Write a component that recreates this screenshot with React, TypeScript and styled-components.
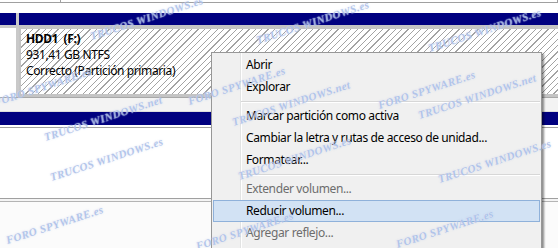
import styled, { createGlobalStyle } from "styled-components";

const GlobalStyle = createGlobalStyle`
  html, body {
    margin: 0;
    padding: 0;
    background: #fff;
  }
  * {
    box-sizing: border-box;
  }
`;

type MenuEntry =
  | { kind: "item"; label: string; disabled?: boolean; active?: boolean }
  | { kind: "sep" };

const menu: MenuEntry[] = [
  { kind: "item", label: "Abrir" },
  { kind: "item", label: "Explorar" },
  { kind: "sep" },
  { kind: "item", label: "Marcar partición como activa" },
  { kind: "item", label: "Cambiar la letra y rutas de acceso de unidad..." },
  { kind: "item", label: "Formatear..." },
  { kind: "sep" },
  { kind: "item", label: "Extender volumen...", disabled: true },
  { kind: "item", label: "Reducir volumen...", active: true },
  { kind: "item", label: "Agregar reflejo...", disabled: true },
  { kind: "item", label: "Eliminar volumen..." },
];

// watermark stamps: left x, baseline y
const marks = [
  { x: 92, y: 42, text: "TRUCOS WINDOWS.es" },
  { x: 258, y: 46, text: "TRUCOS WINDOWS.es" },
  { x: 430, y: 54, text: "TRUCOS WINDOWS.es" },
  { x: -4, y: 108, text: "FORO SPYWARE.es" },
  { x: 190, y: 107, text: "FORO SPYWARE.es" },
  { x: 380, y: 111, text: "FORO SPYWARE.es" },
  { x: 46, y: 143, text: "TRUCOS WINDOWS.net" },
  { x: 234, y: 128, text: "TRUCOS WINDOWS.net" },
  { x: 420, y: 121, text: "TRUCOS WINDOWS.net" },
  { x: 52, y: 183, text: "TRUCOS WINDOWS.es" },
  { x: 240, y: 182, text: "TRUCOS WINDOWS.es" },
  { x: 440, y: 185, text: "TRUCOS WINDOWS.es" },
  { x: 8, y: 246, text: "FORO SPYWARE.es" },
  { x: 198, y: 252, text: "FORO SPYWARE.es" },
  { x: 398, y: 250, text: "FORO SPYWARE.es" },
];

export default function App() {
  return (
    <>
      <GlobalStyle />
      <Screen>
        <TopStrip>
          <TopCell $w={61} />
          <TopCell />
        </TopStrip>

        <DiskRow>
          <Band />
          <Band />
          <DiskInfo />
          <Partition>
            <Hatch>
              <VolName>HDD1  (F:)</VolName>
              <VolLine>931,41 GB NTFS</VolLine>
              <VolLine>Correcto (Partición primaria)</VolLine>
            </Hatch>
          </Partition>
        </DiskRow>

        <RowGap />

        <WideBand />
        <DiskBody />
        <Divider />
        <Rest />

        <Menu>
          {menu.map((m, i) =>
            m.kind === "sep" ? (
              <Separator key={i} />
            ) : (
              <Item key={i} $disabled={m.disabled} $active={m.active}>
                {m.label}
              </Item>
            )
          )}
        </Menu>

        {marks.map((m, i) => (
          <Watermark key={i} $x={m.x} $y={m.y}>
            {m.text}
          </Watermark>
        ))}
      </Screen>
    </>
  );
}

const Screen = styled.div`
  position: relative;
  width: 558px;
  height: 248px;
  overflow: hidden;
  background: #fff;
  display: flex;
  flex-direction: column;
  font-family: "Noto Sans", "Open Sans", sans-serif;
  font-size: 12px;
  letter-spacing: -0.38px;
  color: #000;
`;

const TopStrip = styled.div`
  display: flex;
  height: 13px;
  flex-shrink: 0;
`;

const TopCell = styled.div<{ $w?: number }>`
  ${(p) => (p.$w ? `width: ${p.$w}px;` : "flex: 1;")}
  height: 3px;
  border-bottom: 1px solid #a0a0a0;
  border-right: 1px solid #a0a0a0;
`;

const DiskRow = styled.div`
  display: grid;
  grid-template-columns: 16px 1fr;
  grid-template-rows: 12px 72px;
  column-gap: 3px;
  background: #c9c9c9;
  flex-shrink: 0;
`;

const Band = styled.div`
  background: #00007f;
`;

const DiskInfo = styled.div`
  background: #fff;
  border-top: 3px solid #c9c9c9;
`;

const Partition = styled.div`
  border-top: 4px solid #c4c4c4;
  border-left: 2px solid #c4c4c4;
  border-bottom: 3px solid #c4c4c4;
  display: flex;
`;

const Hatch = styled.div`
  flex: 1;
  padding: 2px 5px;
  background-color: #fff;
  background-image: repeating-linear-gradient(
    135deg,
    transparent 0 3.6px,
    #a3a3a3 3.6px 4.5px
  );
  display: flex;
  flex-direction: column;
`;

const VolName = styled.div`
  font-weight: 700;
  line-height: 16px;
  white-space: pre;
`;

const VolLine = styled.div`
  line-height: 16px;
`;

const RowGap = styled.div`
  height: 15px;
  flex-shrink: 0;
  background: #f3f3f3;
  border-top: 1px solid #a8a8a8;
  border-bottom: 1px solid #dcdcdc;
`;

const WideBand = styled.div`
  height: 13px;
  flex-shrink: 0;
  background: #00007f;
`;

const DiskBody = styled.div`
  height: 73px;
  flex-shrink: 0;
  background: #fff;
  border-top: 2px solid #fff;
  box-shadow: inset 0 3px 0 -2px #a0a0a0;
`;

const Divider = styled.div`
  height: 4px;
  flex-shrink: 0;
  border-top: 1px solid #a0a0a0;
  border-bottom: 1px solid #b4b4b4;
  background: #f4f4f4;
`;

const Rest = styled.div`
  flex: 1;
  background: #fbfbfb;
`;

const Menu = styled.div`
  position: absolute;
  left: 211px;
  top: 52px;
  width: 331px;
  bottom: -40px;
  padding: 1px;
  border: 1px solid #979797;
  background-color: #f0f0f0;
  background-image: linear-gradient(
    to right,
    transparent 28px,
    #e2e3e3 28px 29px,
    #fff 29px 30px,
    transparent 30px
  );
  box-shadow: 2px 2px 2px rgba(0, 0, 0, 0.45);
  display: flex;
  flex-direction: column;
`;

const Item = styled.div<{ $disabled?: boolean; $active?: boolean }>`
  height: 22px;
  line-height: 20px;
  padding-left: 32px;
  border: 1px solid ${(p) => (p.$active ? "#8fb1da" : "transparent")};
  background: ${(p) => (p.$active ? "#d2e2f4" : "transparent")};
  color: ${(p) => (p.$disabled ? "#6d6d6d" : "#000")};
  white-space: nowrap;
`;

const Separator = styled.div`
  height: 7px;
  margin-left: 28px;
  padding-top: 3px;
  &::after {
    content: "";
    display: block;
    height: 1px;
    background: #d7d7d7;
    border-bottom: 1px solid #fff;
    box-sizing: content-box;
  }
`;

const Watermark = styled.span<{ $x: number; $y: number }>`
  position: absolute;
  left: ${(p) => p.$x}px;
  top: ${(p) => p.$y - 12}px;
  height: 12px;
  line-height: 12px;
  transform: rotate(-18deg);
  transform-origin: 0 100%;
  font-family: "Liberation Serif", serif;
  font-style: italic;
  font-weight: 700;
  font-size: 11px;
  letter-spacing: 0.4px;
  color: rgba(110, 145, 215, 0.5);
  text-shadow: 0 0 1px rgba(255, 255, 255, 0.9), 0 0 2px rgba(120, 150, 220, 0.35);
  white-space: nowrap;
  pointer-events: none;
`;
